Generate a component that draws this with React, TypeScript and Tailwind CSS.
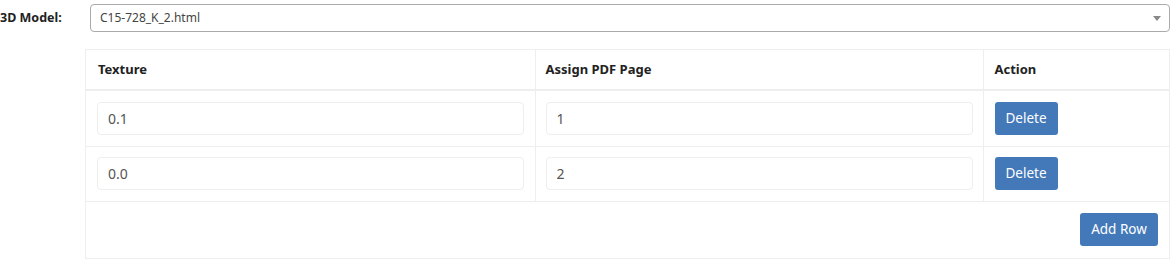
import { useState } from 'react';

type Row = { texture: string; page: string };

export default function App() {
  const [rows, setRows] = useState<Row[]>([
    { texture: '0.1', page: '1' },
    { texture: '0.0', page: '2' },
  ]);

  const update = (i: number, key: keyof Row, value: string) => {
    setRows(rows.map((r, idx) => (idx === i ? { ...r, [key]: value } : r)));
  };

  return (
    <div className="w-[1176px] h-[264px] bg-white text-[#333] font-['Noto_Sans','Open_Sans',sans-serif]">
      <div className="flex items-center pt-[4px]">
        <label className="w-[90px] text-[12.5px] font-bold text-[#222]">3D Model:</label>
        <div className="relative w-[1080px]">
          <select className="w-full h-[28px] appearance-none rounded-[4px] border border-[#aaa] bg-white pl-[9px] text-[12px] text-[#444] outline-none">
            <option>C15-728_K_2.html</option>
          </select>
          <span className="pointer-events-none absolute right-[9px] top-[12px] h-0 w-0 border-x-[4px] border-t-[5px] border-x-transparent border-t-[#888]" />
        </div>
      </div>

      <div className="ml-[85px] mt-[17px] w-[1085px] border border-[#eee]">
        <table className="w-full border-collapse text-[13px]">
          <thead>
            <tr className="h-[40px] border-b-2 border-[#eee]">
              <th className="w-[449px] border-r border-[#eee] px-[12px] text-left font-bold text-[#222]">Texture</th>
              <th className="w-[448px] border-r border-[#eee] px-[10px] text-left font-bold text-[#222]">Assign PDF Page</th>
              <th className="px-[11px] text-left font-bold text-[#222]">Action</th>
            </tr>
          </thead>
          <tbody>
            {rows.map((row, i) => (
              <tr key={i} className={`${i === 0 ? 'h-[56px]' : 'h-[55px]'} border-b border-[#eee]`}>
                <td className="border-r border-[#eee] px-[11px]">
                  <input
                    value={row.texture}
                    onChange={(e) => update(i, 'texture', e.target.value)}
                    className="h-[33px] w-full rounded-[4px] border border-[#eee] px-[10px] text-[14px] text-[#555] outline-none"
                  />
                </td>
                <td className="border-r border-[#eee] px-[10px]">
                  <input
                    value={row.page}
                    onChange={(e) => update(i, 'page', e.target.value)}
                    className="h-[33px] w-full rounded-[4px] border border-[#eee] px-[10px] text-[14px] text-[#555] outline-none"
                  />
                </td>
                <td className="px-[11px]">
                  <button
                    onClick={() => setRows(rows.filter((_, idx) => idx !== i))}
                    className="h-[33px] w-[63px] rounded-[3px] bg-[#4379b9] text-[13.5px] text-white"
                  >
                    Delete
                  </button>
                </td>
              </tr>
            ))}
          </tbody>
        </table>
        <div className="flex h-[56px] items-center justify-end pr-[11px]">
          <button
            onClick={() => setRows([...rows, { texture: '', page: '' }])}
            className="h-[33px] w-[78px] rounded-[3px] bg-[#4379b9] text-[13.5px] text-white"
          >
            Add Row
          </button>
        </div>
      </div>
    </div>
  );
}
